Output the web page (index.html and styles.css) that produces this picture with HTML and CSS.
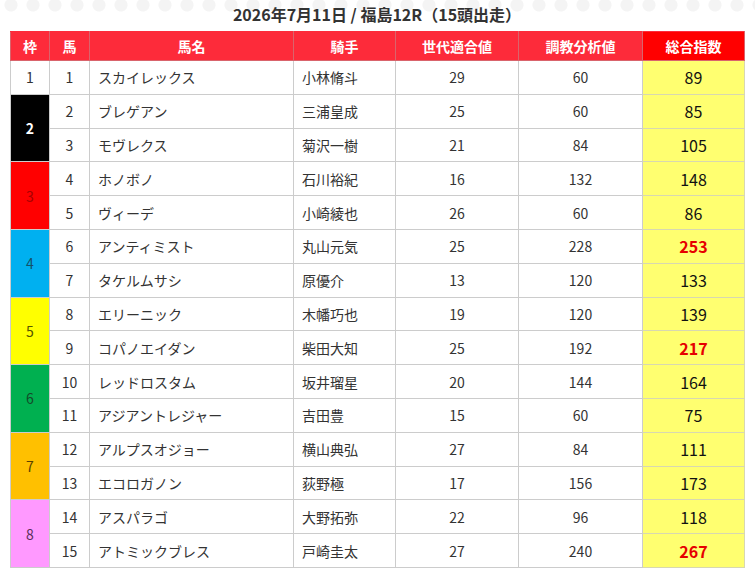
FILE: index.html
```html
<!DOCTYPE html>
<html lang="ja">
<head>
<meta charset="utf-8">
<link rel="stylesheet" href="styles.css">
</head>
<body>
<div class="page">
  <h1 class="title">2026年7月11日 / 福島12R（15頭出走）</h1>
  <table class="race">
    <colgroup>
      <col class="c-waku"><col class="c-uma"><col class="c-name"><col class="c-jockey"><col class="c-gen"><col class="c-train"><col class="c-total">
    </colgroup>
    <thead>
      <tr>
        <th>枠</th><th>馬</th><th>馬名</th><th>騎手</th><th>世代適合値</th><th>調教分析値</th><th class="th-total">総合指数</th>
      </tr>
    </thead>
    <tbody>
      <tr><td class="waku w1">1</td><td class="num">1</td><td class="txt">スカイレックス</td><td class="txt">小林脩斗</td><td class="num">29</td><td class="num">60</td><td class="total">89</td></tr>
      <tr><td class="waku w2" rowspan="2">2</td><td class="num">2</td><td class="txt">ブレゲアン</td><td class="txt">三浦皇成</td><td class="num">25</td><td class="num">60</td><td class="total">85</td></tr>
      <tr><td class="num">3</td><td class="txt">モヴレクス</td><td class="txt">菊沢一樹</td><td class="num">21</td><td class="num">84</td><td class="total">105</td></tr>
      <tr><td class="waku w3" rowspan="2">3</td><td class="num">4</td><td class="txt">ホノボノ</td><td class="txt">石川裕紀</td><td class="num">16</td><td class="num">132</td><td class="total">148</td></tr>
      <tr><td class="num">5</td><td class="txt">ヴィーデ</td><td class="txt">小崎綾也</td><td class="num">26</td><td class="num">60</td><td class="total">86</td></tr>
      <tr><td class="waku w4" rowspan="2">4</td><td class="num">6</td><td class="txt">アンティミスト</td><td class="txt">丸山元気</td><td class="num">25</td><td class="num">228</td><td class="total hi">253</td></tr>
      <tr><td class="num">7</td><td class="txt">タケルムサシ</td><td class="txt">原優介</td><td class="num">13</td><td class="num">120</td><td class="total">133</td></tr>
      <tr><td class="waku w5" rowspan="2">5</td><td class="num">8</td><td class="txt">エリーニック</td><td class="txt">木幡巧也</td><td class="num">19</td><td class="num">120</td><td class="total">139</td></tr>
      <tr><td class="num">9</td><td class="txt">コパノエイダン</td><td class="txt">柴田大知</td><td class="num">25</td><td class="num">192</td><td class="total hi">217</td></tr>
      <tr><td class="waku w6" rowspan="2">6</td><td class="num">10</td><td class="txt">レッドロスタム</td><td class="txt">坂井瑠星</td><td class="num">20</td><td class="num">144</td><td class="total">164</td></tr>
      <tr><td class="num">11</td><td class="txt">アジアントレジャー</td><td class="txt">吉田豊</td><td class="num">15</td><td class="num">60</td><td class="total">75</td></tr>
      <tr><td class="waku w7" rowspan="2">7</td><td class="num">12</td><td class="txt">アルプスオジョー</td><td class="txt">横山典弘</td><td class="num">27</td><td class="num">84</td><td class="total">111</td></tr>
      <tr><td class="num">13</td><td class="txt">エコロガノン</td><td class="txt">荻野極</td><td class="num">17</td><td class="num">156</td><td class="total">173</td></tr>
      <tr><td class="waku w8" rowspan="2">8</td><td class="num">14</td><td class="txt">アスパラゴ</td><td class="txt">大野拓弥</td><td class="num">22</td><td class="num">96</td><td class="total">118</td></tr>
      <tr><td class="num">15</td><td class="txt">アトミックブレス</td><td class="txt">戸崎圭太</td><td class="num">27</td><td class="num">240</td><td class="total hi">267</td></tr>
    </tbody>
  </table>
</div>
</body>
</html>
```

FILE: styles.css
```css
html, body {
  margin: 0;
  padding: 0;
  background: #ffffff;
}
body {
  font-family: "Noto Sans CJK JP", "Noto Sans", sans-serif;
  color: #333333;
}
.page {
  padding: 0 11px 0 10px;
  background-color: #ffffff;
  background-image: radial-gradient(circle at 50% 50%, #f4f4f4 0, #f4f4f4 6px, transparent 7px);
  background-size: 22px 22px;
  background-repeat: repeat-x;
  background-position: 0 -6px;
}
.title {
  margin: 0;
  height: 31px;
  line-height: 29px;
  font-size: 16px;
  font-weight: 700;
  text-align: center;
  color: #333333;
}
.race {
  width: 734px;
  border-collapse: collapse;
  table-layout: fixed;
  background: #ffffff;
}
.c-waku { width: 39px; }
.c-uma { width: 40px; }
.c-name { width: 204px; }
.c-jockey { width: 102px; }
.c-gen { width: 123px; }
.c-train { width: 124px; }
.c-total { width: 102px; }
.race th {
  height: 28px;
  padding: 0;
  background: #fd2b3a;
  color: #ffffff;
  font-size: 14px;
  font-weight: 700;
  border: 1px solid #d9646c;
  border-top-color: #fd2b3a;
  text-align: center;
}
.race th.th-total {
  background: #ff0000;
}
.race td {
  height: 32.8px;
  padding: 0;
  border: 1px solid #cccccc;
  font-size: 14px;
  color: #333333;
  vertical-align: middle;
}
.race td.num, .race td.waku, .race td.total {
  text-align: center;
}
.race td.txt {
  padding-left: 8px;
  white-space: nowrap;
}
.race td.total {
  background: #ffff70;
  color: #111111;
  font-size: 16px;
  border-color: #d8d8b0;
}
.race td.total.hi {
  color: #e60000;
  font-weight: 700;
}
.race td.waku { font-size: 14px; }
.w1 { background: #ffffff; }
.w2 { background: #000000; color: #ffffff !important; font-weight: 700; }
.w3 { background: #ff0000; color: #a80000 !important; }
.w4 { background: #00b0f0; color: #14506a !important; }
.w5 { background: #ffff00; color: #555500 !important; }
.w6 { background: #00b050; color: #144a2a !important; }
.w7 { background: #ffc000; color: #5a4200 !important; }
.w8 { background: #ff99ff; color: #5a305a !important; }
```
